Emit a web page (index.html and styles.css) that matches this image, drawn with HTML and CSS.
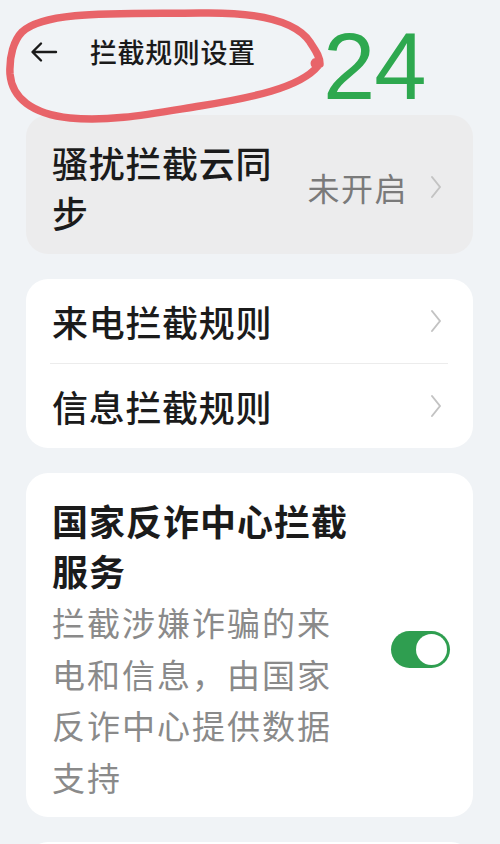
FILE: index.html
```html
<!DOCTYPE html>
<html lang="zh-CN">
<head>
<meta charset="utf-8">
<title>拦截规则设置</title>
<link rel="stylesheet" href="styles.css">
</head>
<body>
<div class="page">
  <header class="topbar">
    <svg class="back" viewBox="0 0 28 22" width="28" height="22" aria-hidden="true">
      <path d="M26 11H3M11 2.5L2.5 11L11 19.5" fill="none" stroke="#1a1a1a" stroke-width="2.4" stroke-linecap="round" stroke-linejoin="round"/>
    </svg>
    <h1 class="title">拦截规则设置</h1>
    <svg class="circle-mark" viewBox="0 0 330 125" width="330" height="125" aria-hidden="true">
      <path d="M22 32 C45 10, 120 14, 200 13 C255 12, 295 20, 310 42 C315 50, 320 56, 320 64 C314 58, 312 66, 318 66 C300 88, 250 98, 200 106 C150 114, 110 122, 70 118 C32 114, 12 98, 10 74 C9 56, 14 40, 22 32" fill="none" stroke="#e64a50" stroke-opacity="0.85" stroke-width="7.5" stroke-linecap="round" stroke-linejoin="round"/>
    </svg>
    <span class="mark-num">24</span>
  </header>

  <main class="list">
    <section class="card card-pressed">
      <div class="row row-tall">
        <span class="label label-narrow">骚扰拦截云同步</span>
        <span class="value">未开启</span>
        <svg class="chev" viewBox="0 0 12 24" width="12" height="24" aria-hidden="true"><path d="M2 2L10 12L2 22" fill="none" stroke="#c3c3c3" stroke-width="2" stroke-linecap="round" stroke-linejoin="round"/></svg>
      </div>
    </section>

    <section class="card">
      <div class="row row-link">
        <span class="label">来电拦截规则</span>
        <svg class="chev" viewBox="0 0 12 24" width="12" height="24" aria-hidden="true"><path d="M2 2L10 12L2 22" fill="none" stroke="#c3c3c3" stroke-width="2" stroke-linecap="round" stroke-linejoin="round"/></svg>
      </div>
      <div class="divider"></div>
      <div class="row row-link">
        <span class="label">信息拦截规则</span>
        <svg class="chev" viewBox="0 0 12 24" width="12" height="24" aria-hidden="true"><path d="M2 2L10 12L2 22" fill="none" stroke="#c3c3c3" stroke-width="2" stroke-linecap="round" stroke-linejoin="round"/></svg>
      </div>
    </section>

    <section class="card">
      <div class="row row-switch">
        <div class="text-col">
          <div class="label label-bold">国家反诈中心拦截服务</div>
          <div class="desc">拦截涉嫌诈骗的来电和信息，由国家反诈中心提供数据支持</div>
        </div>
        <span class="toggle"><span class="knob"></span></span>
      </div>
    </section>

    <section class="card card-peek"></section>
  </main>
</div>
</body>
</html>
```

FILE: styles.css
```css
* { box-sizing: border-box; }
html, body {
  margin: 0;
  padding: 0;
  background: #f0f3f6;
}
body {
  font-family: "Noto Sans CJK SC", "Noto Sans", sans-serif;
  color: #1b1b1b;
  overflow: hidden;
}
.page {
  width: 500px;
  height: 844px;
  overflow: hidden;
}
.topbar {
  position: relative;
  height: 104px;
  display: flex;
  align-items: center;
  padding-left: 30px;
}
.back {
  display: block;
  flex: none;
}
.title {
  margin: 0 0 0 32px;
  font-size: 27px;
  font-weight: 500;
  letter-spacing: 0.6px;
  line-height: 36px;
  color: #1a1a1a;
}
.circle-mark {
  position: absolute;
  left: 0;
  top: 0;
}
.mark-num {
  position: absolute;
  left: 323px;
  top: 13px;
  font-family: "Liberation Sans", Arial, sans-serif;
  font-size: 94px;
  line-height: 108px;
  color: #2ea84f;
  letter-spacing: -1px;
}
.list {
  padding: 11px 27px 0 26px;
  display: flex;
  flex-direction: column;
  gap: 25px;
}
.card {
  background: #ffffff;
  border-radius: 22px;
}
.card-pressed {
  background: #ececed;
}
.row {
  display: flex;
  align-items: center;
  padding: 0 31px 0 26px;
}
.row-tall {
  padding-top: 22px;
  padding-bottom: 17px;
}
.label {
  font-size: 36px;
  line-height: 50px;
  font-weight: 500;
  letter-spacing: 0.7px;
  flex: 1;
}
.label-narrow {
  flex: none;
  width: 238px;
}
.value {
  margin-left: auto;
  font-size: 32px;
  line-height: 40px;
  color: #7a7a7a;
  letter-spacing: 1.5px;
  margin-right: 22px;
}
.chev {
  display: block;
  flex: none;
}
.row-link {
  height: 84px;
}
.divider {
  height: 1px;
  background: #ececec;
  margin: 0 25px 0 24px;
}
.row-switch {
  padding: 22px 23px 14px 26px;
}
.text-col {
  width: 305px;
  flex: none;
}
.label-bold {
  font-weight: 700;
  letter-spacing: 1px;
}
.desc {
  margin-top: 2px;
  font-size: 33px;
  line-height: 51.5px;
  letter-spacing: 2px;
  color: #8a8a8a;
}
.toggle {
  margin-left: auto;
  width: 59px;
  height: 37px;
  border-radius: 19px;
  background: #2f9e50;
  display: flex;
  align-items: center;
  justify-content: flex-end;
  padding-right: 3px;
}
.knob {
  width: 31px;
  height: 31px;
  border-radius: 50%;
  background: #ffffff;
}
.card-peek {
  height: 100px;
  flex: none;
}
```
